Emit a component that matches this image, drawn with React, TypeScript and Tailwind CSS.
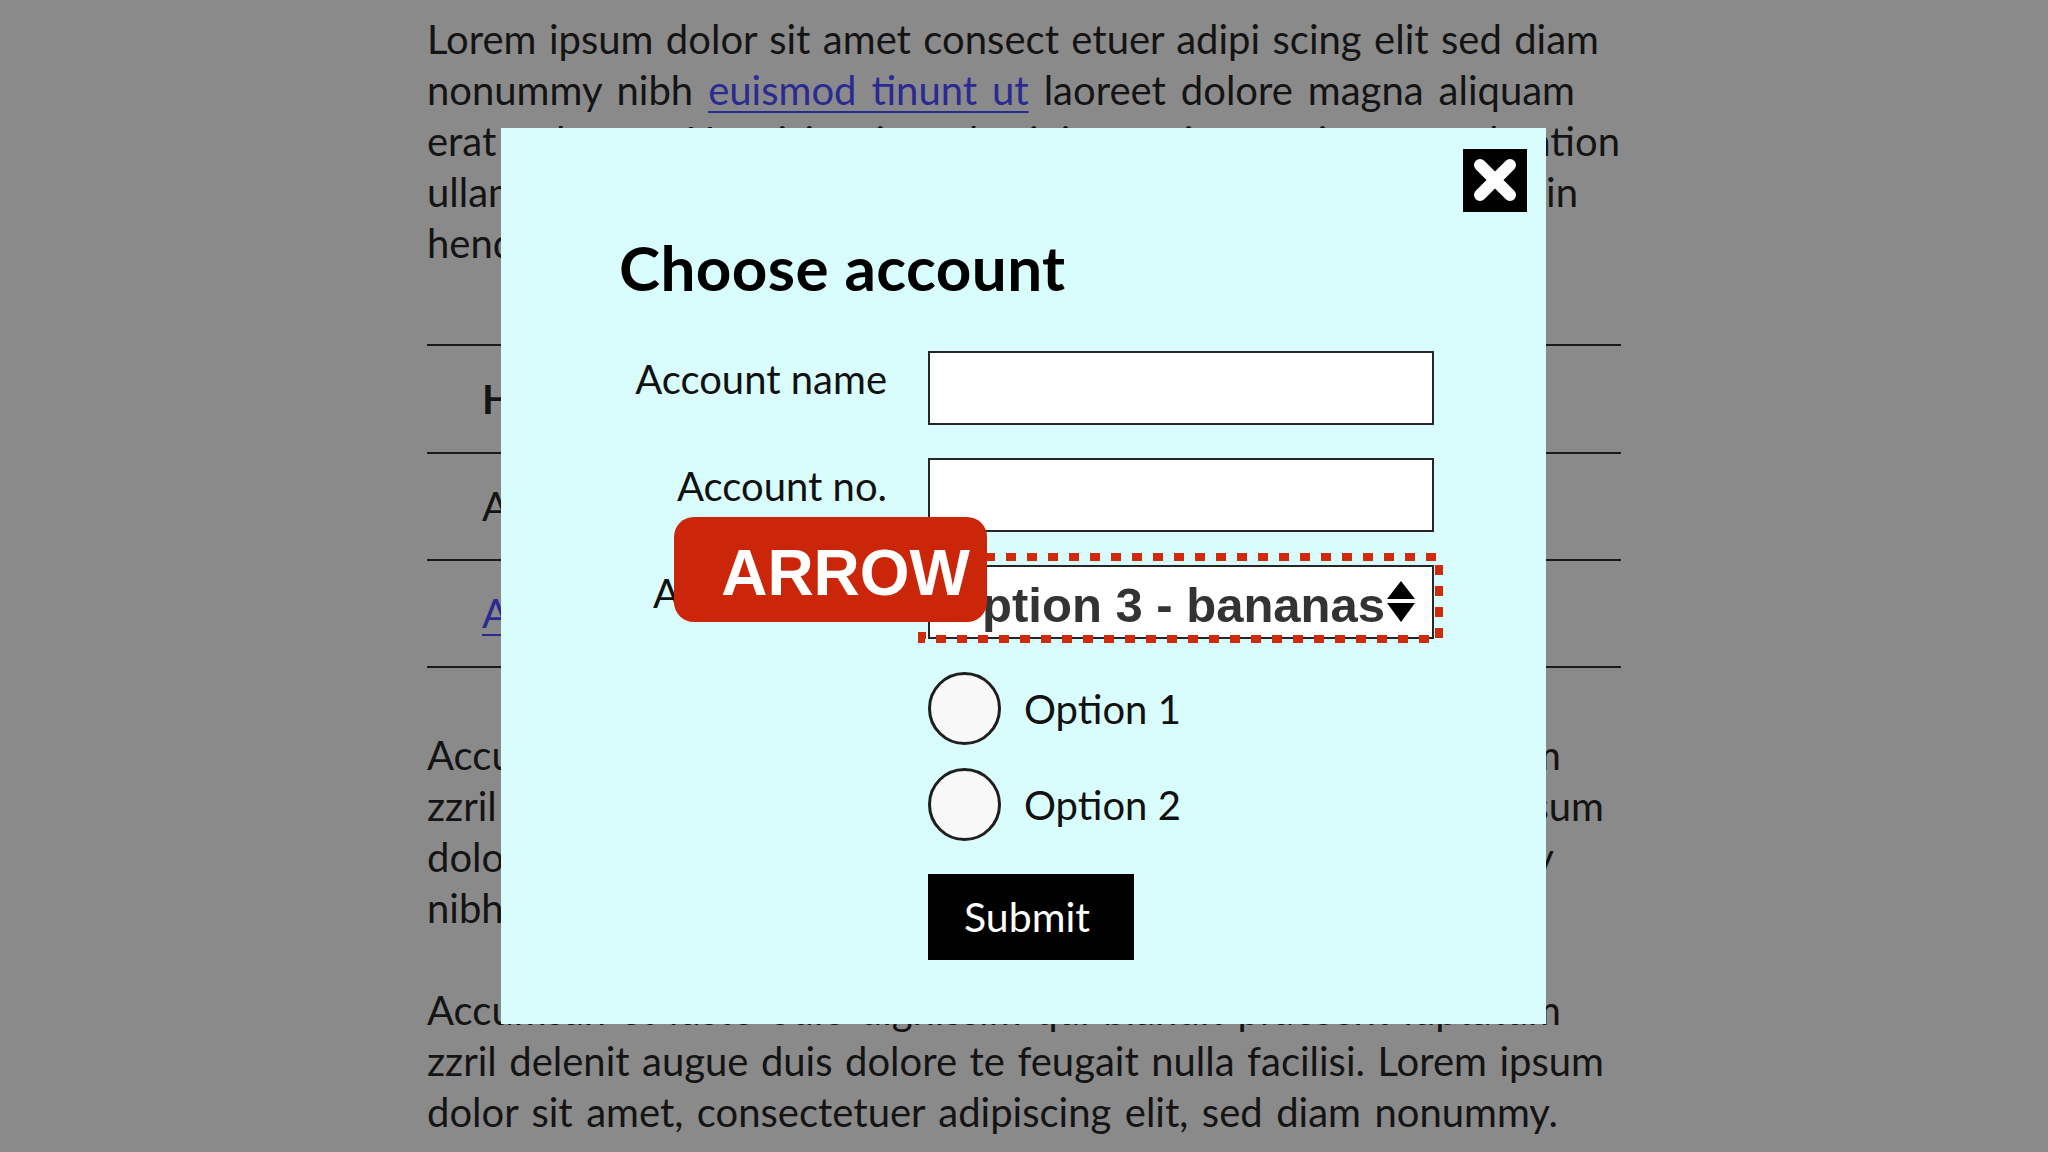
import React from "react";

const Line = ({ className, children }: { className: string; children: React.ReactNode }) => (
  <span className={`block [text-align-last:justify] ${className}`}>{children}</span>
);

const App = () => {
  return (
    <div className="relative h-[1152px] w-[2048px] overflow-hidden bg-[#8a8a8a] font-['Lato',sans-serif]">
      {/* page behind the dialog */}
      <div className="ml-[427px] w-[1194px] pt-[14px] text-[40px] leading-[51px] text-[#141414]">
        <p>
          <Line className="w-[1172px]">Lorem ipsum dolor sit amet consect etuer adipi scing elit sed diam</Line>
          <Line className="w-[1148px]">
            nonummy nibh{" "}
            <a href="#" className="text-[#2a2a92] underline decoration-2 underline-offset-[6px]">
              euismod tinunt ut
            </a>{" "}
            laoreet dolore magna aliquam
          </Line>
          <Line className="w-[1193px]">erat volutpat. Ut wisi enim ad minim veniam, quis nostrud tation</Line>
          <Line className="w-[1151px]">ullamcorper suscipit lobortis nisl ut aliquip ex ea commodo in</Line>
          <span className="block">hendrerit in vulputate velit esse molestie consequat</span>
        </p>

        <table className="mt-[75px] w-full border-collapse">
          <tbody>
            <tr className="h-[108px] border-y-2 border-[#1a1a1a]">
              <th className="pl-[55px] text-left font-bold">Heading</th>
              <th className="text-left font-bold">Number</th>
            </tr>
            <tr className="h-[107px] border-b-2 border-[#1a1a1a]">
              <td className="pl-[55px]">Account one</td>
              <td>0001</td>
            </tr>
            <tr className="h-[107px] border-b-2 border-[#1a1a1a]">
              <td className="pl-[55px]">
                <a href="#" className="text-[#2a2a92] underline decoration-2 underline-offset-[6px]">
                  Account two
                </a>
              </td>
              <td>0002</td>
            </tr>
          </tbody>
        </table>

        <p className="mt-[62px]">
          <Line className="w-[1134px]">Accumsan et iusto odio dignissim qui blandit praesent luptatum</Line>
          <Line className="w-[1177px]">zzril delenit augue duis dolore te feugait nulla facilisi. Lorem ipsum</Line>
          <Line className="w-[1127px]">dolor sit amet, consectetuer adipiscing elit, sed diam nonummy</Line>
          <span className="block">nibh euismod tincidunt ut laoreet dolore magna</span>
        </p>

        <p className="mt-[51px]">
          <Line className="w-[1134px]">Accumsan et iusto odio dignissim qui blandit praesent luptatum</Line>
          <Line className="w-[1177px]">zzril delenit augue duis dolore te feugait nulla facilisi. Lorem ipsum</Line>
          <Line className="w-[1131px]">dolor sit amet, consectetuer adipiscing elit, sed diam nonummy.</Line>
        </p>
      </div>

      {/* dialog */}
      <div className="absolute left-[501px] top-[128px] flex h-[896px] w-[1045px] flex-col bg-[#d9fcfc] text-[#111]">
        <div className="flex justify-end pr-[19px] pt-[21px]">
          <button className="flex h-[63px] w-[64px] items-center justify-center bg-black">
            <svg width="64" height="63" viewBox="0 0 64 63">
              <path d="M17 16 L47 46 M47 16 L17 46" stroke="white" strokeWidth="12" strokeLinecap="round" />
            </svg>
          </button>
        </div>

        <h2 className="mt-[19px] pl-[118px] text-[62px] font-bold leading-[72px] tracking-[0.4px] text-black">
          Choose account
        </h2>

        <div className="mt-[48px] grid grid-cols-[386px_506px] gap-x-[41px] gap-y-[33px] text-[40px]">
          <label className="self-center pb-[19px] text-right leading-[48px]">Account name</label>
          <div className="h-[74px] border-2 border-[#262626] bg-white" />

          <label className="self-center pb-[19px] text-right leading-[48px]">Account no.</label>
          <div className="h-[74px] border-2 border-[#262626] bg-white" />

          <label className="self-center pb-[19px] text-right leading-[48px]">Account type</label>
          <div className="flex h-[74px] items-center border-2 border-[#262626] bg-white pl-[14px] pt-[6px] font-['Liberation_Sans',Arial,sans-serif] text-[49px] font-bold leading-none text-[#333]">
            <span>Option 3 - bananas</span>
            <svg width="30" height="42" viewBox="0 0 30 42" className="-mt-[6px] ml-[1px] shrink-0">
              <path d="M15 0 L29 18 L1 18 Z" fill="black" />
              <path d="M1 22 L29 22 L15 41 Z" fill="black" />
            </svg>
          </div>

          <div />
          <div className="flex flex-col gap-[23px]">
            {["Option 1", "Option 2"].map((o) => (
              <label key={o} className="flex items-center gap-[23px] leading-[48px]">
                <span className="h-[73px] w-[73px] rounded-full border-[3px] border-[#1e1e1e] bg-[#f8f8f8]" />
                <span>{o}</span>
              </label>
            ))}
          </div>

          <div />
          <div>
            <button className="h-[86px] w-[206px] bg-black pr-[8px] text-[41px] text-white">Submit</button>
          </div>
        </div>

        {/* annotation: dotted focus outline */}
        <svg className="absolute left-[417px] top-[425px]" width="525" height="90" viewBox="0 0 525 90">
          <rect x="4" y="4" width="517" height="82" fill="none" stroke="#cf2a0b" strokeWidth="8" strokeDasharray="10 11" />
        </svg>

        {/* annotation badge */}
        <div className="absolute left-[173px] top-[389px] flex h-[105px] w-[313px] items-center justify-end rounded-[20px] bg-[#cb2609] pr-[17px] pt-[6px] font-['Liberation_Sans',Arial,sans-serif] text-[64px] font-bold leading-none text-white">
          ARROW
        </div>
      </div>
    </div>
  );
};

export default App;
